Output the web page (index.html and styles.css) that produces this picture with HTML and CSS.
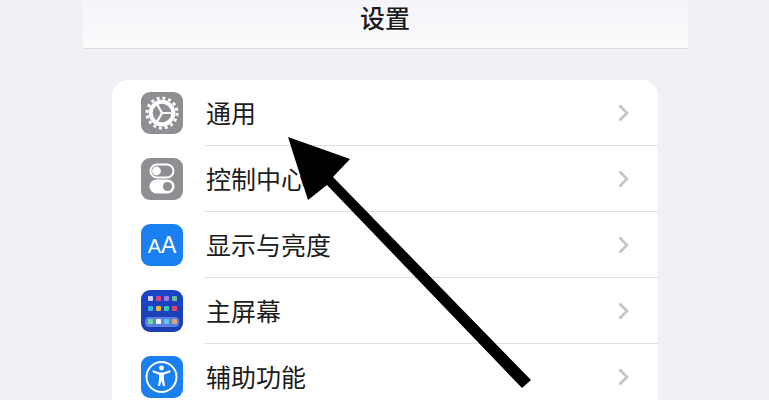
FILE: index.html
```html
<!DOCTYPE html>
<html lang="zh-CN">
<head>
<meta charset="utf-8">
<title>设置</title>
<link rel="stylesheet" href="styles.css">
</head>
<body>
<div class="screen">
  <header class="nav"><h1 class="nav-title">设置</h1></header>
  <ul class="list">
    <li class="row">
      <span class="icon icon-gray">
        <svg viewBox="0 0 42 42" width="42" height="42">
          <circle cx="21" cy="21" r="15" fill="none" stroke="#fff" stroke-width="3" stroke-dasharray="2.95 2.94"/>
          <circle cx="21" cy="21" r="11.3" fill="none" stroke="#fff" stroke-width="4"/>
          <path d="M21 21 H31 M21 21 L16 12.3 M21 21 L16 29.7" fill="none" stroke="#fff" stroke-width="2.2"/>
        </svg>
      </span>
      <span class="label">通用</span>
      <svg class="chevron" viewBox="0 0 12 18" width="12" height="18"><path d="M2.5 1.5 L10 9 L2.5 16.5" /></svg>
    </li>
    <li class="row">
      <span class="icon icon-gray">
        <svg viewBox="0 0 42 42" width="42" height="42">
          <rect x="9.5" y="6.5" width="23" height="13" rx="6.5" fill="none" stroke="#fff" stroke-width="2"/>
          <circle cx="15.5" cy="13" r="4.4" fill="#fff"/>
          <rect x="8.5" y="21.5" width="25" height="14" rx="7" fill="#fff"/>
          <circle cx="26.5" cy="28.5" r="4.6" fill="#8e8e93"/>
        </svg>
      </span>
      <span class="label">控制中心</span>
      <svg class="chevron" viewBox="0 0 12 18" width="12" height="18"><path d="M2.5 1.5 L10 9 L2.5 16.5" /></svg>
    </li>
    <li class="row">
      <span class="icon icon-blue"><span class="aa"><span class="aa-small">A</span>A</span></span>
      <span class="label">显示与亮度</span>
      <svg class="chevron" viewBox="0 0 12 18" width="12" height="18"><path d="M2.5 1.5 L10 9 L2.5 16.5" /></svg>
    </li>
    <li class="row">
      <span class="icon icon-navy">
        <svg viewBox="0 0 42 42" width="42" height="42">
          <rect x="7" y="6" width="5" height="5" rx="1" fill="#c9d3f5"/>
          <rect x="15" y="6" width="5" height="5" rx="1" fill="#e0417f"/>
          <rect x="23" y="6" width="5" height="5" rx="1" fill="#9d7be8"/>
          <rect x="31" y="6" width="5" height="5" rx="1" fill="#63c28f"/>
          <rect x="7" y="16" width="5" height="5" rx="1" fill="#35b6ea"/>
          <rect x="15" y="16" width="5" height="5" rx="1" fill="#f0b429"/>
          <rect x="23" y="16" width="5" height="5" rx="1" fill="#2fc4c0"/>
          <rect x="31" y="16" width="5" height="5" rx="1" fill="#e8476a"/>
          <rect x="4" y="27" width="34" height="10" rx="4" fill="#5c7fe0"/>
          <rect x="7" y="29" width="5" height="5" rx="1" fill="#6fd8a0"/>
          <rect x="15" y="29" width="5" height="5" rx="1" fill="#f4f6ff"/>
          <rect x="23" y="29" width="5" height="5" rx="1" fill="#5fc9ea"/>
          <rect x="31" y="29" width="5" height="5" rx="1" fill="#d9a57a"/>
        </svg>
      </span>
      <span class="label">主屏幕</span>
      <svg class="chevron" viewBox="0 0 12 18" width="12" height="18"><path d="M2.5 1.5 L10 9 L2.5 16.5" /></svg>
    </li>
    <li class="row">
      <span class="icon icon-blue">
        <svg viewBox="0 0 42 42" width="42" height="42">
          <circle cx="20.5" cy="21" r="15" fill="none" stroke="#fff" stroke-width="2"/>
          <circle cx="20.5" cy="12" r="2.4" fill="#fff"/>
          <path d="M12.5 15.5 L18 17.5 H23 L28.5 15.5" fill="none" stroke="#fff" stroke-width="2.2" stroke-linecap="round" stroke-linejoin="round"/>
          <path d="M18 17 H23 V23.5 L24 30 H22 L20.5 24.5 L19 30 H17 L18 23.5 Z" fill="#fff"/>
        </svg>
      </span>
      <span class="label">辅助功能</span>
      <svg class="chevron" viewBox="0 0 12 18" width="12" height="18"><path d="M2.5 1.5 L10 9 L2.5 16.5" /></svg>
    </li>
  </ul>
  <svg class="arrow" viewBox="0 0 769 400" width="769" height="400">
    <polygon points="288,137 350,159 333,177 531,380 522,388 327,185 308,200" fill="#000"/>
  </svg>
</div>
</body>
</html>
```

FILE: styles.css
```css
* { box-sizing: border-box; }
html, body { margin: 0; padding: 0; }
body {
  background: #f1f0f7;
  font-family: "Noto Sans CJK SC", "Liberation Sans", sans-serif;
  color: #111;
}
.screen {
  position: relative;
  width: 769px;
  height: 400px;
  overflow: hidden;
  padding-left: 83px;
}
.nav {
  width: 605px;
  height: 49px;
  background: linear-gradient(#f5f4f9, #fbfbfc);
  border-bottom: 1px solid #dcdce2;
  display: flex;
  justify-content: center;
}
.nav-title {
  margin: 0 0 0 -1px;
  font-size: 25px;
  line-height: 34px;
  font-weight: 500;
  color: #1a1a1a;
}
.list {
  list-style: none;
  margin: 31px 0 0 29px;
  padding: 0 0 0 29px;
  width: 546px;
  background: #fff;
  border-radius: 16px 16px 0 0;
}
.row {
  height: 66px;
  display: flex;
  align-items: center;
  position: relative;
}
.row + .row::before {
  content: "";
  position: absolute;
  left: 64px;
  right: 0;
  top: -1px;
  height: 1px;
  background: #dfdfe2;
}
.icon {
  width: 42px;
  height: 42px;
  border-radius: 9px;
  flex: none;
  display: flex;
  align-items: center;
  justify-content: center;
  overflow: hidden;
}
.icon svg { display: block; }
.icon-gray { background: #8e8e93; }
.icon-blue { background: #1a80f0; }
.icon-navy { background: linear-gradient(#1a44c8, #1c3fb0); }
.aa {
  color: #fff;
  font-family: "Liberation Sans", sans-serif;
  font-size: 23px;
  line-height: 1;
}
.aa-small { font-size: 20px; }
.label {
  margin: 0 0 2px 23px;
  flex: 1;
  font-size: 25px;
  line-height: 34px;
  font-weight: 400;
  color: #1c1c1c;
}
.chevron {
  flex: none;
  margin-right: 29px;
  fill: none;
  stroke: #c4c4c7;
  stroke-width: 2.6;
}
.arrow {
  position: absolute;
  left: 0;
  top: 0;
  pointer-events: none;
}
```
